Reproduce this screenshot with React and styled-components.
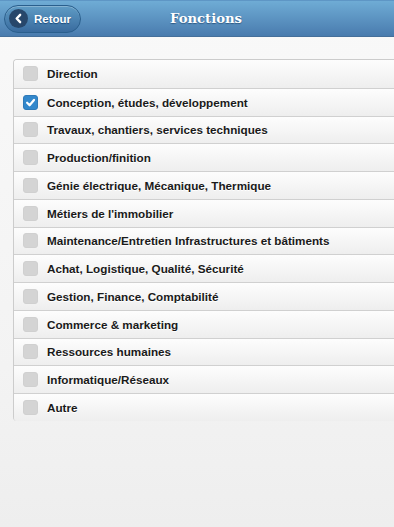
import React, { useState } from "react";
import styled, { createGlobalStyle } from "styled-components";

const Global = createGlobalStyle`
  html, body { margin: 0; padding: 0; }
  body {
    width: 394px; height: 527px; overflow: hidden;
    font-family: "Liberation Sans", Arial, sans-serif;
    background: #f1f1f1;
  }
`;

const Page = styled.div`
  width: 394px;
  height: 527px;
  display: flex;
  flex-direction: column;
  background: linear-gradient(#f9f9f9 0%, #f3f3f3 70%, #eeeeee 100%);
`;

const Header = styled.header`
  height: 35px;
  flex: none;
  display: flex;
  align-items: center;
  position: relative;
  padding: 0 4px;
  background: linear-gradient(#6facd5, #497bae);
  border-bottom: 1px solid #456f9a;
  border-top: 1px solid #5e96c5;
`;

const BackButton = styled.button`
  height: 28px;
  width: 77px;
  box-sizing: border-box;
  display: flex;
  align-items: center;
  gap: 6px;
  padding: 0 0 0 4px;
  border-radius: 14px;
  border: 1px solid #2a5f8d;
  background: linear-gradient(#5f9cc5, #396b9e);
  box-shadow: inset 0 1px 0 rgba(255,255,255,0.25);
  color: #fff;
  font-family: "Liberation Sans", Arial, sans-serif;
  font-weight: bold;
  font-size: 11.5px;
  text-shadow: 0 1px 1px #194b7e;
  cursor: pointer;
`;

const IconCircle = styled.span`
  width: 19px;
  height: 19px;
  border-radius: 50%;
  background: #27476b;
  display: flex;
  align-items: center;
  justify-content: center;
  flex: none;
`;

const Title = styled.h1`
  position: absolute;
  left: 0;
  right: 0;
  top: 0;
  bottom: 0;
  margin: 0;
  padding-left: 18px;
  display: flex;
  align-items: center;
  justify-content: center;
  font-family: "DejaVu Serif", serif;
  font-weight: bold;
  font-size: 13.2px;
  color: #fff;
  text-shadow: 0 1px 1px #2f5b86;
  pointer-events: none;
`;

const Content = styled.main`
  padding: 22px 0 0 13px;
`;

const List = styled.div`
  border-left: 1px solid #cccccc;
  border-top: 1px solid #cccccc;
  border-top-left-radius: 4px;
  border-bottom-left-radius: 4px;
  overflow: hidden;
`;

const Row = styled.label`
  height: 27.75px;
  box-sizing: border-box;
  display: flex;
  align-items: center;
  padding-left: 9px;
  gap: 9px;
  background: linear-gradient(#fdfdfd, #eeeeee);
  border-top: ${(p) => (p.$first ? "none" : "1px solid #d0d0d0")};
  cursor: pointer;
`;

const Box = styled.span`
  width: 15px;
  height: 15px;
  box-sizing: border-box;
  border-radius: 3px;
  flex: none;
  display: flex;
  align-items: center;
  justify-content: center;
  background: ${(p) => (p.$checked ? "#3388cc" : "#d4d4d4")};
  border: 1px solid ${(p) => (p.$checked ? "#2f7ab8" : "#d0d0d0")};
`;

const Label = styled.span`
  font-family: "Liberation Sans", Arial, sans-serif;
  font-weight: bold;
  font-size: 11.7px;
  color: #1a1a1a;
  white-space: nowrap;
  text-shadow: 0 1px 0 #fff;
`;

const items = [
  "Direction",
  "Conception, études, développement",
  "Travaux, chantiers, services techniques",
  "Production/finition",
  "Génie électrique, Mécanique, Thermique",
  "Métiers de l'immobilier",
  "Maintenance/Entretien Infrastructures et bâtiments",
  "Achat, Logistique, Qualité, Sécurité",
  "Gestion, Finance, Comptabilité",
  "Commerce & marketing",
  "Ressources humaines",
  "Informatique/Réseaux",
  "Autre",
];

export default function App() {
  const [checked, setChecked] = useState({ 1: true });
  return (
    <Page>
      <Global />
      <Header>
        <BackButton>
          <IconCircle>
            <svg width="11" height="11" viewBox="0 0 12 12">
              <path d="M7.8 2 L4 6 L7.8 10" fill="none" stroke="#fff" strokeWidth="2.6" strokeLinecap="round" strokeLinejoin="round" />
            </svg>
          </IconCircle>
          Retour
        </BackButton>
        <Title>Fonctions</Title>
      </Header>
      <Content>
        <List>
          {items.map((t, i) => (
            <Row key={i} $first={i === 0} onClick={() => setChecked((c) => ({ ...c, [i]: !c[i] }))}>
              <Box $checked={!!checked[i]}>
                {checked[i] && (
                  <svg width="11" height="11" viewBox="0 0 12 12">
                    <path d="M2.3 6.3 L5 9 L9.8 3.2" fill="none" stroke="#fff" strokeWidth="2.4" strokeLinecap="round" strokeLinejoin="round" />
                  </svg>
                )}
              </Box>
              <Label>{t}</Label>
            </Row>
          ))}
        </List>
      </Content>
    </Page>
  );
}
